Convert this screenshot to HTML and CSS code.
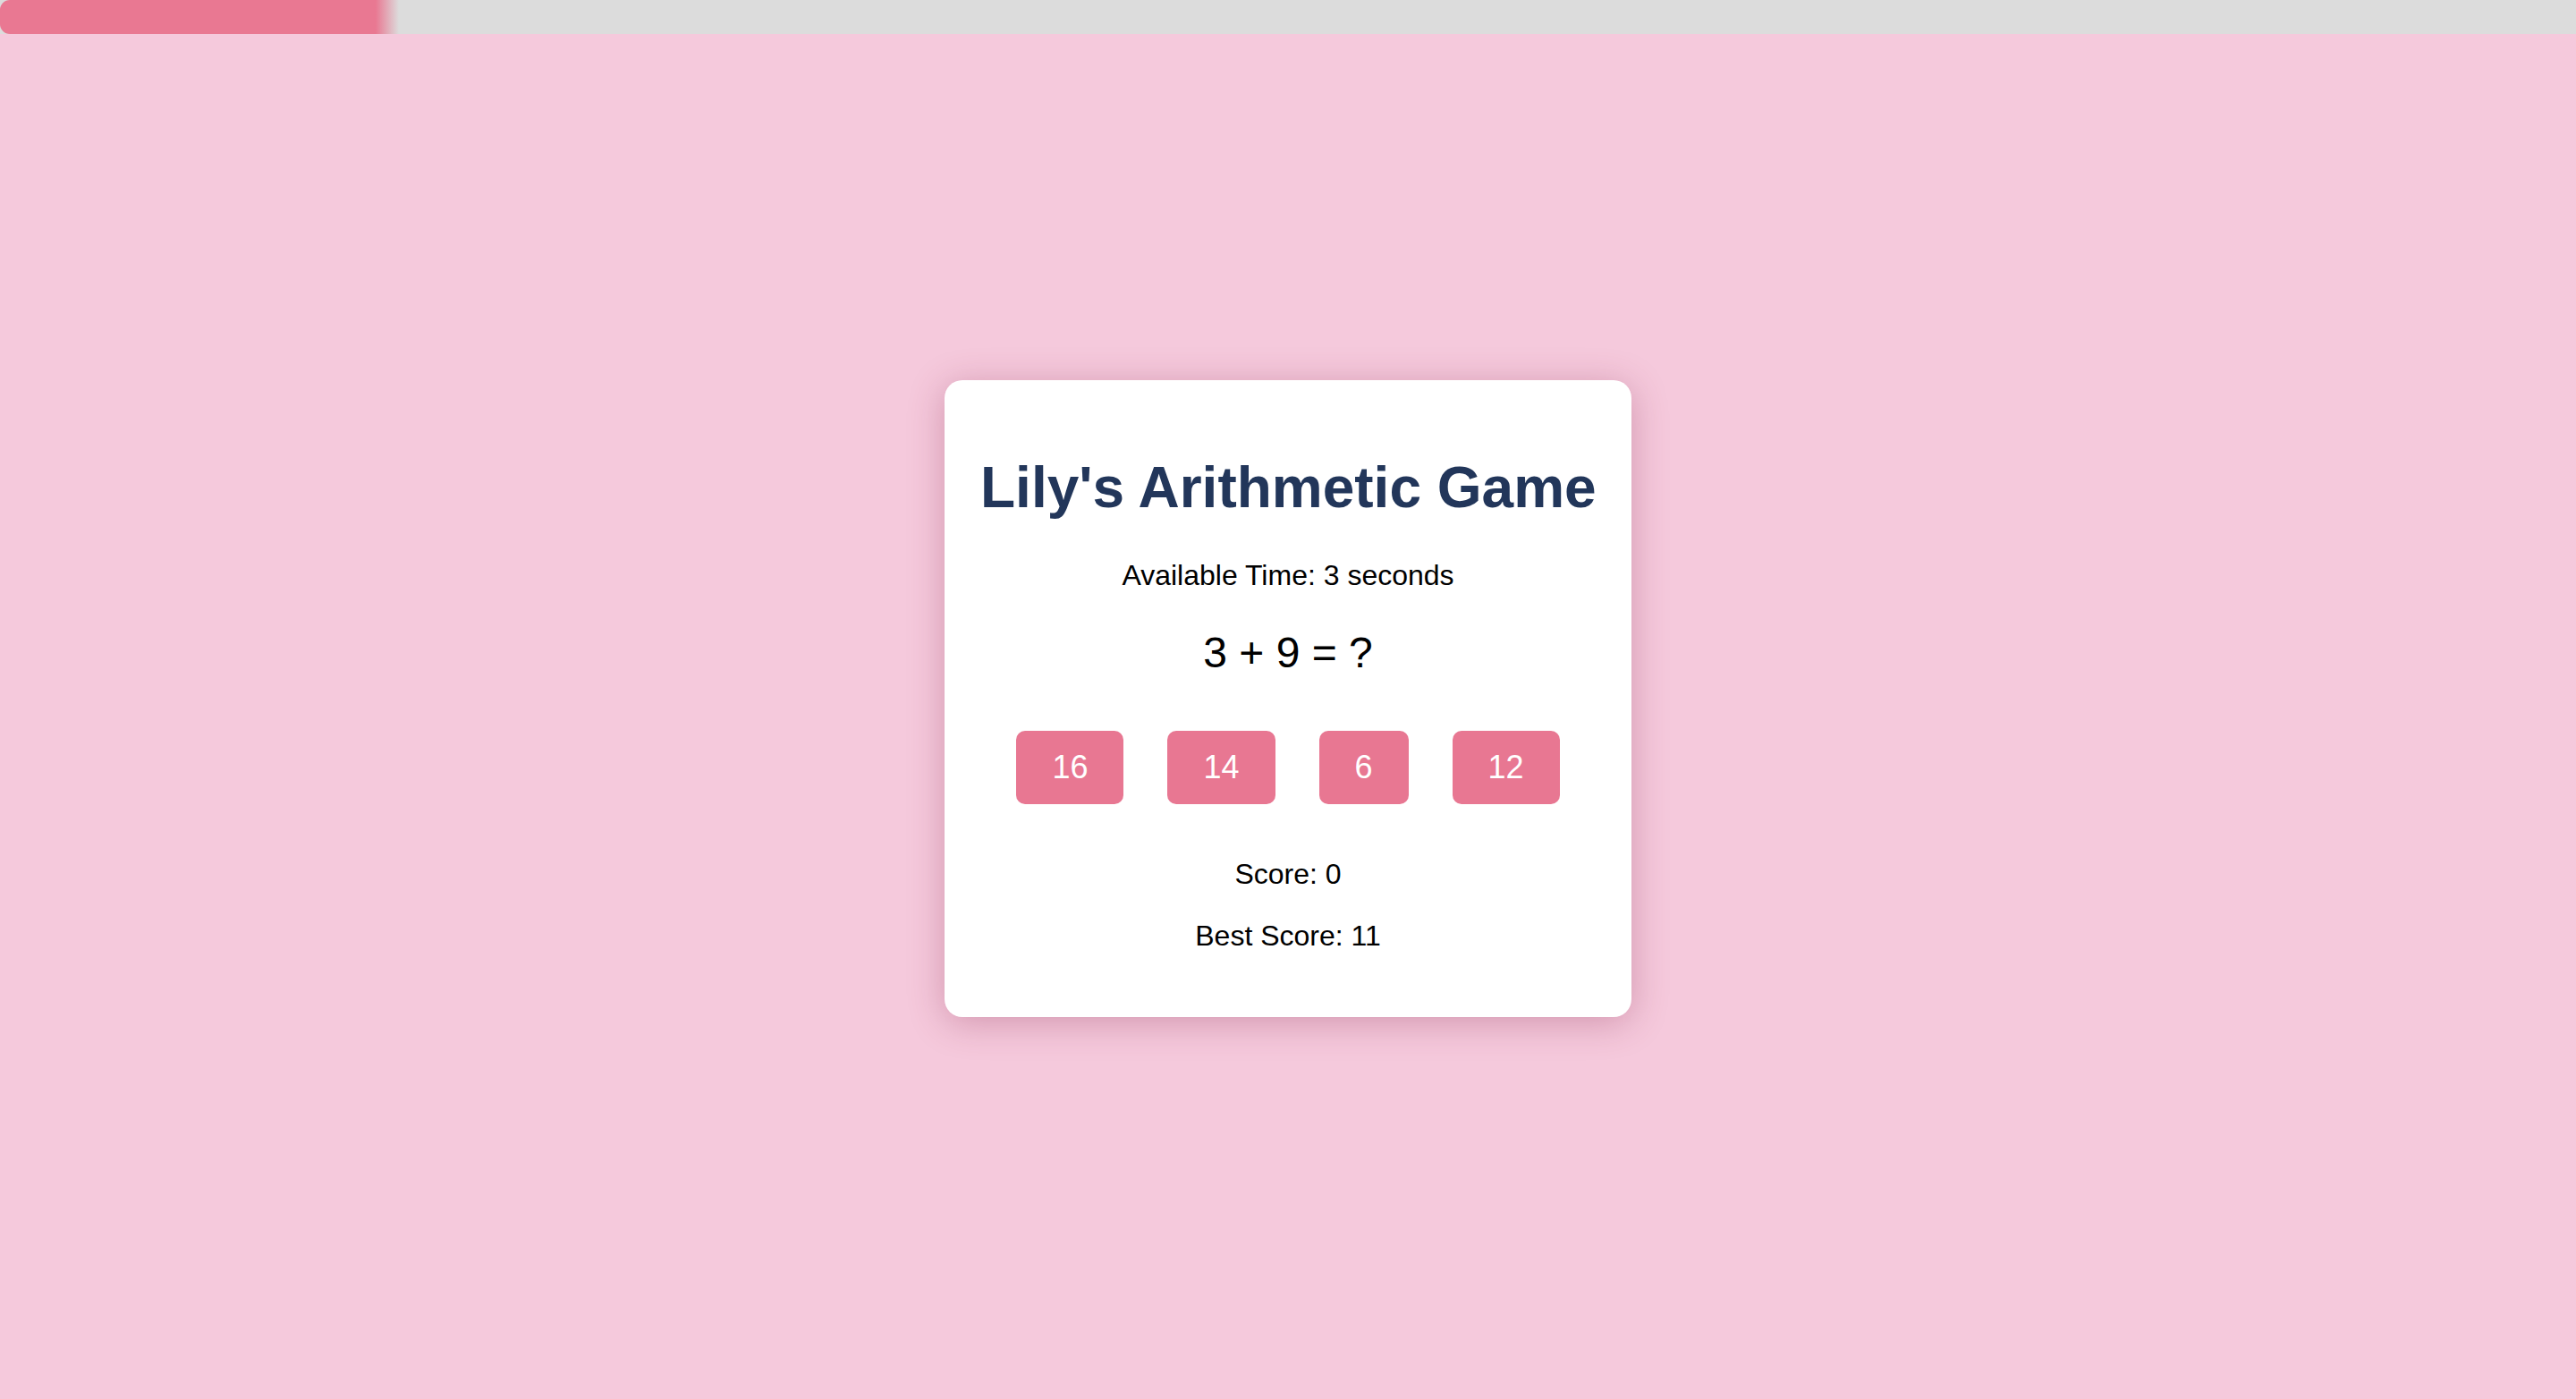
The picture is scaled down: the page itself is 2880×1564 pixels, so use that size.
FILE: index.html
```html
<!DOCTYPE html>
<html lang="en">
<head>
<meta charset="utf-8">
<title>Lily's Arithmetic Game</title>
<link rel="stylesheet" href="styles.css">
</head>
<body>
<div class="timer-track"><div class="timer-fill"></div></div>
<main class="stage">
  <section class="card">
    <h1 class="title">Lily's Arithmetic Game</h1>
    <p class="info">Available Time: 3 seconds</p>
    <div class="question">3 + 9 = ?</div>
    <div class="options">
      <button class="option">16</button>
      <button class="option">14</button>
      <button class="option">6</button>
      <button class="option">12</button>
    </div>
    <p class="info">Score: 0</p>
    <p class="info">Best Score: 11</p>
  </section>
</main>
</body>
</html>
```
FILE: styles.css
```css
html, body {
  margin: 0;
  padding: 0;
}
body {
  background: #f5c9dc;
  font-family: "Liberation Sans", Arial, sans-serif;
  color: #000;
}
.timer-track {
  position: fixed;
  top: 0;
  left: 0;
  right: 0;
  height: 38px;
  background: #dcdcdc;
}
.timer-fill {
  width: 446px;
  height: 100%;
  border-radius: 11px 0 0 11px;
  background: linear-gradient(to right, #e97892 0, #e97892 420px, rgba(233,120,146,0) 446px);
}
.stage {
  min-height: 1564px;
  display: flex;
  align-items: center;
  justify-content: center;
}
.card {
  box-sizing: border-box;
  width: 768px;
  padding: 40px;
  background: #fff;
  border-radius: 20px;
  box-shadow: 0 6px 40px rgba(130, 30, 65, 0.3);
  text-align: center;
  margin-top: -3px;
}
.title {
  margin: 43px 0;
  font-size: 64px;
  font-weight: bold;
  color: #22365a;
  white-space: nowrap;
}
.info {
  margin: 32px 0;
  font-size: 32px;
}
.question {
  margin: 40px 0;
  font-size: 48px;
}
.options {
  margin: 60px 0;
  display: flex;
  justify-content: center;
  gap: 49px;
}
.option {
  font-family: "Liberation Sans", Arial, sans-serif;
  font-size: 36px;
  padding: 20px 40px;
  border: none;
  border-radius: 10px;
  background: #e87792;
  color: #fff;
  cursor: pointer;
}
```
